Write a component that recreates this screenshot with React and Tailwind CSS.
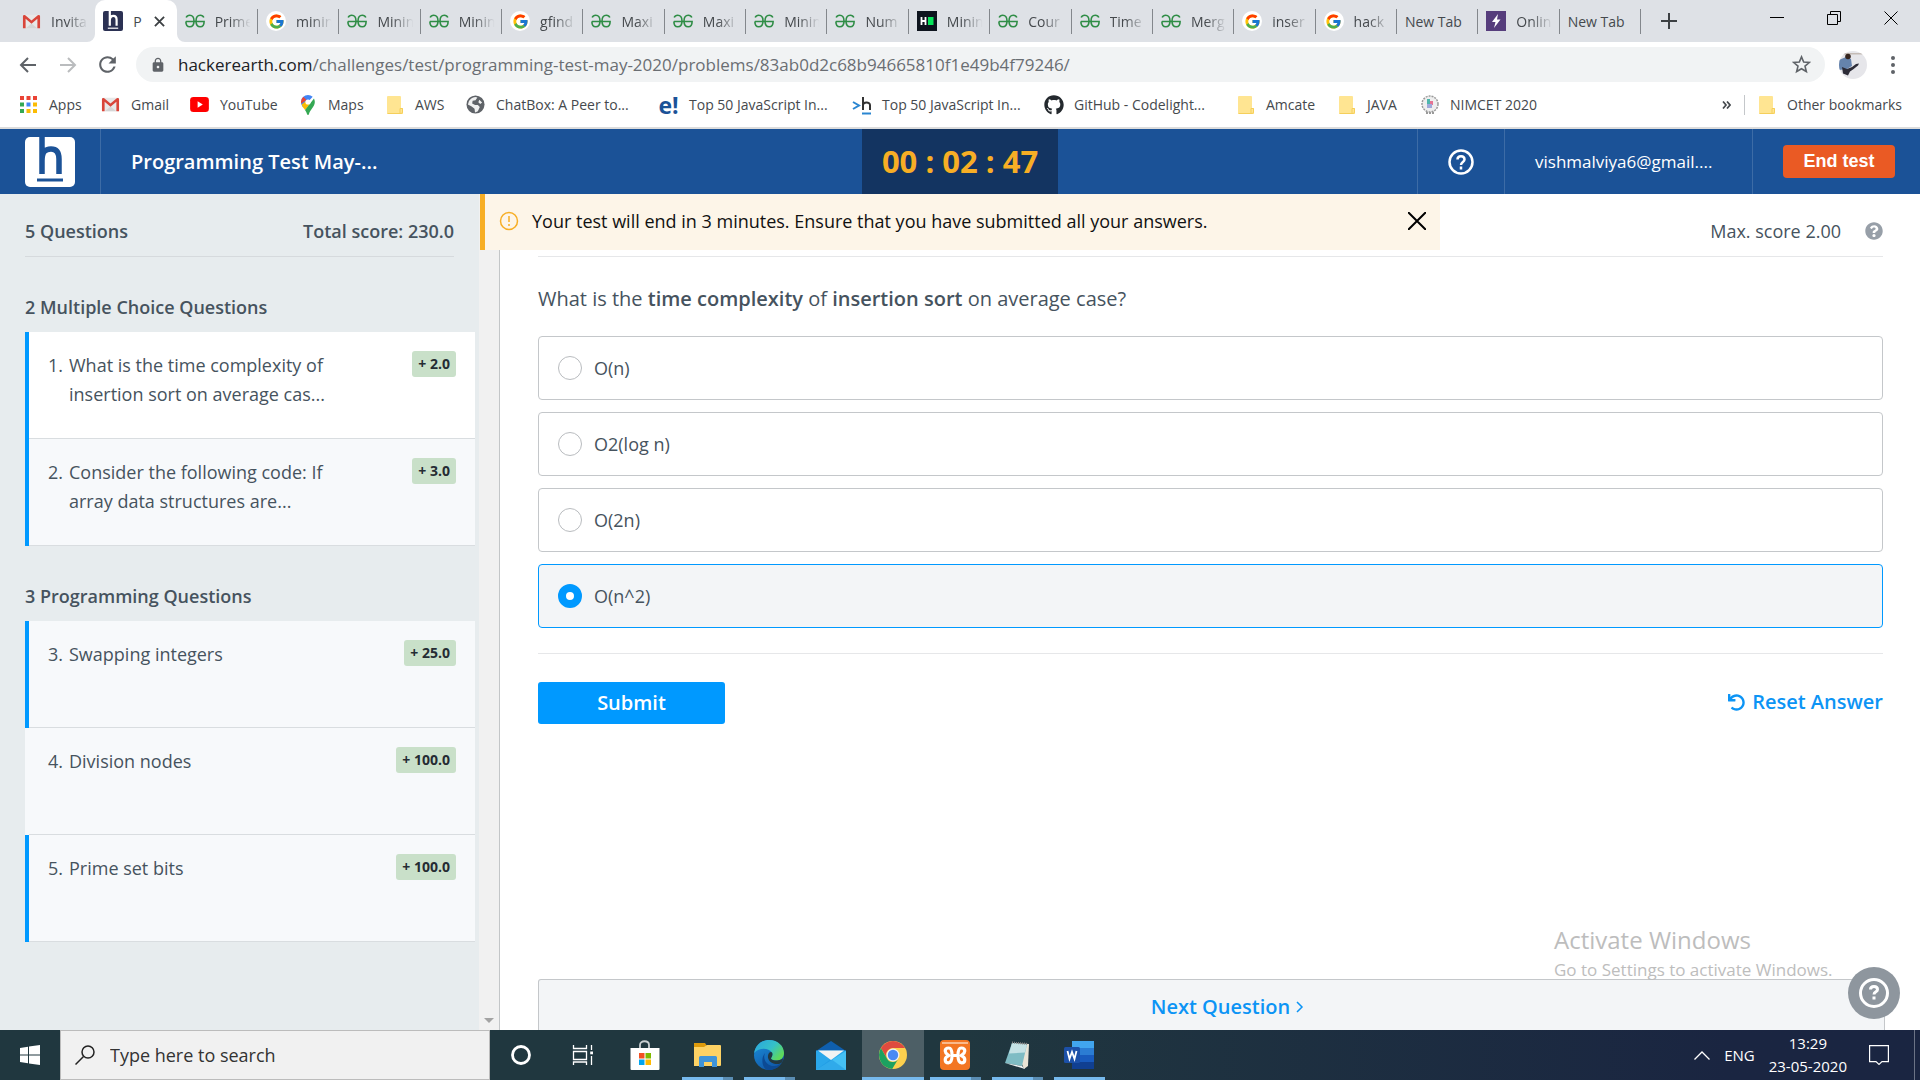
import { FcGoogle } from "react-icons/fc";
import { FaGithub, FaUndo, FaQuestionCircle } from "react-icons/fa";
import { MdLock, MdRefresh } from "react-icons/md";

const PAGE = "font-['Open_Sans','Noto_Sans',sans-serif]";

function GmailIcon() {
  return (
    <svg viewBox="0 0 20 20" className="size-[19px] shrink-0" aria-hidden="true">
      <rect x="1" y="3" width="18" height="14" rx="1" fill="#e8e8e8" />
      <path d="M4 17l6-5 6 5z" fill="#d5d5d5" />
      <path d="M1 4.5A1.5 1.5 0 0 1 3.400 3.400L10 9l6.600-5.600A1.500 1.500 0 0 1 19 4.500V17h-2.800V7.200L10 12.300 3.800 7.200V17H1z" fill="#d9453a" />
    </svg>
  );
}

function HeMark({ className, bg, fg }) {
  return (
    <svg viewBox="0 0 50 50" className={className} aria-hidden="true">
      <rect width="50" height="50" rx="5" fill={bg} />
      <path d="M17 0v37M17 24c0-9 3-12 9-12s8 4 8 10v15" fill="none" stroke={fg} strokeWidth="5.500" />
      <path d="M12 43h26" stroke={fg} strokeWidth="3" />
    </svg>
  );
}

function GoogleIcon() {
  return (
    <span className="flex size-5 shrink-0 items-center justify-center rounded-full bg-white">
      <FcGoogle size={17} />
    </span>
  );
}

function Favicon({ kind }) {
  if (kind === "gmail") return <GmailIcon />;
  if (kind === "he") return <HeMark className="size-5 shrink-0" bg="#2b3153" fg="#fff" />;
  if (kind === "google") return <GoogleIcon />;
  if (kind === "gfg")
    return (
      <svg viewBox="0 0 20 14" className="h-[14px] w-5 shrink-0" fill="none" stroke="#2f8d46" strokeWidth="1.600" aria-hidden="true">
        <path d="M18.800 3.500C18.200 2 16.800 1.200 15.300 1.200c-2.800 0-4.300 2.300-4.300 5.800s1.500 5.800 4.300 5.800c2.500 0 3.800-1.800 3.800-5.300H.9" />
        <path d="M1.200 3.500C1.800 2 3.200 1.200 4.700 1.200 7.500 1.200 9 3.500 9 7s-1.500 5.800-4.300 5.800C2.200 12.800.9 11 .9 7.500" />
      </svg>
    );
  if (kind === "hr")
    return (
      <svg viewBox="0 0 20 20" className="size-5 shrink-0" aria-hidden="true">
        <rect width="20" height="20" fill="#0e141e" />
        <path d="M4.500 6v8M8.500 6v8M4.500 10h4" stroke="#fff" strokeWidth="1.800" />
        <rect x="11" y="6" width="5.500" height="8" fill="#08e65c" />
      </svg>
    );
  if (kind === "bolt")
    return (
      <svg viewBox="0 0 20 20" className="size-5 shrink-0" aria-hidden="true">
        <rect width="20" height="20" fill="#563d7c" />
        <path d="M12 3l-6 8h3.500L8 17l6.500-8.500H11z" fill="#fff" />
      </svg>
    );
  return null;
}

const tabs = [
  ["gmail", "Invita"],
  ["he", "P"],
  ["gfg", "Prime"],
  ["google", "minin"],
  ["gfg", "Minin"],
  ["gfg", "Minin"],
  ["google", "gfind"],
  ["gfg", "Maxi"],
  ["gfg", "Maxi"],
  ["gfg", "Minin"],
  ["gfg", "Num"],
  ["hr", "Minin"],
  ["gfg", "Cour"],
  ["gfg", "Time"],
  ["gfg", "Merg"],
  ["google", "inser"],
  ["google", "hack"],
  [null, "New Tab"],
  ["bolt", "Onlin"],
  [null, "New Tab"],
];

function TabStrip() {
  return (
    <div className="flex h-[42px] shrink-0 items-stretch bg-[#dee1e6] pl-[14px] text-[14px] text-[#45494d]">
      <div role="tablist" className="grid max-w-[1627px] flex-1 auto-cols-[minmax(0,1fr)] grid-flow-col">
        {tabs.map(([kind, label], i) =>
          i === 1 ? (
            <div key={i} role="tab" aria-selected="true" className="relative flex items-center rounded-t-[10px] bg-white pl-[8px] pr-[12px]">
              <svg viewBox="0 0 8 8" className="absolute -left-2 bottom-0 size-2" fill="#fff" aria-hidden="true"><path d="M8 0v8H0a8 8 0 0 0 8-8z" /></svg>
              <svg viewBox="0 0 8 8" className="absolute -right-2 bottom-0 size-2" fill="#fff" aria-hidden="true"><path d="M0 0v8h8a8 8 0 0 1-8-8z" /></svg>
              <Favicon kind={kind} />
              <span className="ml-[10px]">{label}</span>
              <button type="button" aria-label="Close tab" className="ml-auto">
                <svg viewBox="0 0 12 12" className="size-[11px]" fill="none" stroke="#3c4043" strokeWidth="2">
                  <path d="M1 1l10 10M11 1L1 11" />
                </svg>
              </button>
            </div>
          ) : (
            <div key={i} role="tab" aria-selected="false" className="flex items-center">
              <div className="flex min-w-0 flex-1 items-center gap-[10px] pl-[8px]">
                <Favicon kind={kind} />
                <span className={kind ? "flex-1 whitespace-nowrap mask-r-from-35% mask-r-to-85%" : "whitespace-nowrap"}>{label}</span>
              </div>
              {i > 0 && <span className="h-[25px] w-px bg-[#83878c]" />}
            </div>
          )
        )}
      </div>
      <button type="button" aria-label="New tab" className="ml-5 flex items-center">
        <svg viewBox="0 0 16 16" className="size-4" stroke="#3c4043" strokeWidth="2">
          <path d="M8 0v16M0 8h16" />
        </svg>
      </button>
      <div className="ml-auto flex items-center gap-[43px] pb-[6px] pr-[22px] text-black">
        <button type="button" aria-label="Minimize">
          <svg viewBox="0 0 14 14" className="size-[14px]" stroke="currentColor">
            <path d="M0 6.500h14" />
          </svg>
        </button>
        <button type="button" aria-label="Restore">
          <svg viewBox="0 0 14 14" className="size-[14px]" fill="none" stroke="currentColor">
            <path d="M.5 3.500h10v10H.5zM3.500 3.500v-3h10v10h-3" />
          </svg>
        </button>
        <button type="button" aria-label="Close">
          <svg viewBox="0 0 14 14" className="size-[14px]" stroke="currentColor">
            <path d="M.5.5l13 13M13.500.5l-13 13" />
          </svg>
        </button>
      </div>
    </div>
  );
}

function Toolbar() {
  return (
    <div className="flex h-[45px] shrink-0 items-center bg-white pr-[25px]">
      <button type="button" aria-label="Back" className="ml-[19px]">
        <svg viewBox="0 0 18 16" className="h-4 w-[18px]" fill="none" stroke="#5f6368" strokeWidth="2">
          <path d="M17 8H2M9 1L2 8l7 7" />
        </svg>
      </button>
      <button type="button" aria-label="Forward" className="ml-[22px]">
        <svg viewBox="0 0 18 16" className="h-4 w-[18px]" fill="none" stroke="#babcbe" strokeWidth="2">
          <path d="M1 8h15M9 1l7 7-7 7" />
        </svg>
      </button>
      <button type="button" aria-label="Reload" className="ml-[18px]">
        <MdRefresh size={25} color="#5f6368" />
      </button>
      <div className="ml-4 flex h-[35px] flex-1 items-center rounded-full bg-[#f1f3f4] pl-[14px] pr-[14px]">
        <MdLock size={16} color="#5f6368" />
        <div role="textbox" aria-label="Address" className="ml-3 flex-1 text-[17px] text-[#6a6e73]">
          <span className="text-[#202124]">hackerearth.com</span>/challenges/test/programming-test-may-2020/problems/83ab0d2c68b94665810f1e49b4f79246/
        </div>
        <svg viewBox="0 0 20 20" className="size-[19px]" fill="none" stroke="#5f6368" strokeWidth="1.700">
          <path d="M10 2l2.300 5.400 5.900.5-4.500 3.800 1.400 5.700L10 14.400l-5.100 3 1.400-5.700L1.800 7.900l5.900-.5z" />
        </svg>
      </div>
      <svg viewBox="0 0 28 28" className="ml-[14px] size-7" aria-hidden="true">
        <clipPath id="avatar"><circle cx="14" cy="14" r="14" /></clipPath>
        <g clipPath="url(#avatar)">
          <rect width="28" height="28" fill="#e6e6ea" />
          <path d="M0 2h28v1.500H0z" fill="#c4bbb5" />
          <path d="M0 9l7-3 5 2 1 7-5 3-8 1z" fill="#6583ad" />
          <circle cx="9" cy="5.500" r="2.800" fill="#37261f" />
          <path d="M3 16l5 2 5-2 4-3 3-.5-1 2-5 4-3 2-2 4-5-2z" fill="#2d2c38" />
        </g>
      </svg>
      <svg viewBox="0 0 4 18" className="ml-6 h-[18px] w-1" fill="#5f6368" aria-hidden="true">
        <circle cx="2" cy="2" r="2" /><circle cx="2" cy="9" r="2" /><circle cx="2" cy="16" r="2" />
      </svg>
    </div>
  );
}

function Folder() {
  return (
    <svg viewBox="0 0 16 18" className="h-[18px] w-4" aria-hidden="true">
      <path d="M1 0h12a1 1 0 0 1 1 1v11h2v6H1a1 1 0 0 1-1-1V1a1 1 0 0 1 1-1z" fill="#ffe592" />
      <path d="M13 17v-4.500h2.500V16a1.500 1.500 0 0 1-1.500 1.500H.5" fill="none" stroke="#f5cf5a" />
    </svg>
  );
}

const appColors = ["#ea4335", "#ea4335", "#ea4335", "#34a853", "#4285f4", "#fbbc04", "#34a853", "#fbbc04", "#fbbc04"];

const bookmarks = [
  ["w-[82px]", "Apps", <svg viewBox="0 0 17 17" className="size-[17px]">{appColors.map((c, i) => <rect key={i} x={(i % 3) * 6.5} y={Math.floor(i / 3) * 6.5} width="4" height="4" fill={c} />)}</svg>],
  ["w-[89px]", "Gmail", <GmailIcon />],
  ["w-[108px]", "YouTube", <svg viewBox="0 0 20 16" className="h-[15px] w-[19px]"><rect width="20" height="16" rx="3.500" fill="#f00" /><path d="M8 4.500v7l5.500-3.500z" fill="#fff" /></svg>],
  ["w-[87px]", "Maps", <svg viewBox="0 0 14 20" className="h-5 w-[14px]"><path d="M7 0a7 7 0 0 0-7 7c0 2 .7 3.500 2 5.200L11.700 1.800A7 7 0 0 0 7 0z" fill="#4285f4" /><path d="M2.400 1.800A7 7 0 0 0 .2 8.500L5.500 5z" fill="#ea4335" /><path d="M.7 9.500C1.500 12 3 13.500 4 15l5-6-4-3z" fill="#fbbc04" /><path d="M13 3.500c2 4.500 0 7.500-2 10-1.500 2-2.500 3.500-3 5.500-.3 1.300-1.700 1.300-2 0-.4-1.500-1-2.700-2-4z" fill="#34a853" /><circle cx="7" cy="7" r="2.600" fill="#fff" /></svg>],
  ["w-[81px]", "AWS", <Folder />],
  ["w-[193px]", "ChatBox: A Peer to...", <svg viewBox="0 0 20 20" className="size-[19px]"><circle cx="10" cy="10" r="9.500" fill="#5f6368" /><path d="M12 2.500l-2 3-3 .5-.5 3 3 1.500h3l2 2-2 4.500-3 1.500-.5-4-3-2.500L2 10A8 8 0 0 1 12 2.500zM14 5l3 3-2 1.500-2-2z" fill="#fff" opacity=".9" /></svg>],
  ["w-[193px]", "Top 50 JavaScript In...", <span className="text-[23px] font-bold leading-5 text-[#1b5297]">e!</span>],
  ["w-[192px]", "Top 50 JavaScript In...", <svg viewBox="0 0 20 20" className="size-5" fill="none"><path d="M1 7l6 3.500L1 14" stroke="#2a86d1" strokeWidth="2" /><path d="M11 2v13M11 10c0-3 7-3.500 7 0v5" stroke="#333" strokeWidth="2" /><path d="M10 18.500h9" stroke="#2a86d1" strokeWidth="2" /></svg>],
  ["w-[192px]", "GitHub - Codelight...", <FaGithub size={20} color="#24292e" />],
  ["w-[101px]", "Amcate", <Folder />],
  ["w-[83px]", "JAVA", <Folder />],
  ["w-[140px]", "NIMCET 2020", <svg viewBox="0 0 20 20" className="size-5"><circle cx="10" cy="9" r="8" fill="#eee" stroke="#999" strokeDasharray="2 1" strokeWidth="1.500" /><rect x="7" y="4" width="3" height="5" fill="#4db6ac" /><rect x="10" y="6" width="3" height="4" fill="#e57393" /><rect x="7" y="9" width="5" height="4" fill="#9fa8da" /><path d="M6 18h8" stroke="#999" strokeWidth="2" strokeDasharray="2 1" /></svg>],
];

function Bookmarks() {
  return (
    <nav className="flex h-[42px] shrink-0 items-center border-b-2 border-[#dcdcdc] bg-white pb-[5px] pl-[18px] pr-[18px] text-[14px] text-[#45494d]">
      {bookmarks.map(([w, label, icon], i) => (
        <a key={i} href="#" className={`${w} flex items-center gap-[10px] whitespace-nowrap`}>
          <span className="flex w-[21px] shrink-0 justify-center">{icon}</span>
          {label}
        </a>
      ))}
      <button type="button" aria-label="More bookmarks" className="ml-auto">
        <svg viewBox="0 0 9 8" className="h-2 w-[9px]" fill="none" stroke="#45494d" strokeWidth="1.700"><path d="M1 .5L4 4 1 7.500M5 .5L8 4 5 7.500" /></svg>
      </button>
      <span className="ml-[13px] h-5 w-px bg-[#c4c7ca]" />
      <a href="#" className="ml-[14px] flex items-center gap-[12px]">
        <Folder />
        Other bookmarks
      </a>
    </nav>
  );
}

function Header() {
  return (
    <header className="grid h-[65px] shrink-0 grid-cols-[1fr_196px_1fr] bg-[#1b5297] text-white">
      <div className="flex items-stretch">
        <a href="#" aria-label="HackerEarth" className="flex w-[101px] items-center border-r border-[#3d6ca6] pl-[25px]">
          <HeMark className="size-[50px]" bg="#fff" fg="#1b5297" />
        </a>
        <h1 className="flex items-center pl-[30px] text-[20px] font-semibold">Programming Test May-...</h1>
      </div>
      <div className="flex items-center justify-center bg-[#133461] text-[31px] font-bold text-[#f7ae25]">00 : 02 : 47</div>
      <div className="flex items-stretch justify-end">
        <button type="button" aria-label="Help" className="flex w-[87px] items-center justify-center border-l border-[#3d6ca6]">
          <svg viewBox="0 0 26 26" className="size-[26px]" fill="none" stroke="#fff" strokeWidth="2.500">
            <circle cx="13" cy="13" r="11.500" />
            <path d="M9.500 10.500c0-4.500 7-4.500 7 0 0 2.500-3.500 2.500-3.500 5.500M13 17.500v3" />
          </svg>
        </button>
        <div className="flex w-[249px] items-center border-x border-[#3d6ca6] pl-[30px] text-[17px]">vishmalviya6@gmail....</div>
        <div className="flex w-[167px] items-center justify-end pr-[25px]">
          <button type="button" className="h-[33px] w-28 rounded-[4px] bg-[#ea5a24] font-['Liberation_Sans',sans-serif] text-[18px] font-bold">End test</button>
        </div>
      </div>
    </header>
  );
}

const groups = [
  {
    title: "2 Multiple Choice Questions",
    items: [
      { n: 1, text: "What is the time complexity of insertion sort on average cas...", score: "2.0", mark: true, current: true },
      { n: 2, text: "Consider the following code: If array data structures are...", score: "3.0", mark: true },
    ],
  },
  {
    title: "3 Programming Questions",
    items: [
      { n: 3, text: "Swapping integers", score: "25.0", mark: true },
      { n: 4, text: "Division nodes", score: "100.0" },
      { n: 5, text: "Prime set bits", score: "100.0", mark: true },
    ],
  },
];

function QuestionItem({ item }) {
  return (
    <li className={`border-l-4 ${item.mark ? "border-[#0099ff]" : "border-[#f7f9fb]"}`}>
      <a
        href="#"
        className={`flex min-h-[107px] items-start border-b border-[#d9dde0] pl-[19px] pr-[19px] pt-[19px] ${item.current ? "bg-white" : "bg-[#f7f9fb]"}`}
      >
        <span className="w-[21px] shrink-0 text-[18px] leading-[29px]">{item.n}.</span>
        <span className="w-[280px] text-[18px] leading-[29px]">{item.text}</span>
        <span className="ml-auto rounded-[3px] bg-[#c9e0c9] px-[6px] text-[14px] font-bold leading-[26px] text-[#252c33]">+ {item.score}</span>
      </a>
    </li>
  );
}

function Sidebar() {
  return (
    <aside className="flex w-[500px] shrink-0 border-r border-[#c3c6c8]">
      <div className="flex-1 bg-[#e7ecee] pl-[25px] pr-[4px] text-[#46535e]">
        <div className="mr-[21px] flex justify-between border-b border-[#d6dadd] pb-[10px] pt-[22px] text-[18px] font-semibold leading-[30px]">
          <span>5 Questions</span>
          <span>Total score: 230.0</span>
        </div>
        {groups.map((g) => (
          <section key={g.title} className="pt-[35px]">
            <h2 className="text-[18px] font-semibold leading-[30px]">{g.title}</h2>
            <ol className="mt-[10px]">
              {g.items.map((item) => <QuestionItem key={item.n} item={item} />)}
            </ol>
          </section>
        ))}
      </div>
      <div className="flex w-5 items-end justify-center bg-[#f1f1f1] pb-[7px]">
        <svg viewBox="0 0 10 5" className="h-[5px] w-[10px]" fill="#a3a3a3" aria-hidden="true"><path d="M0 0h10L5 5z" /></svg>
      </div>
    </aside>
  );
}

const options = ["O(n)", "O2(log n)", "O(2n)", "O(n^2)"];

function Question() {
  return (
    <main className="relative flex min-w-0 flex-1 flex-col bg-white pl-[38px] pr-[37px] text-[#46535e]">
      <div className="flex items-center justify-end gap-6 border-b border-[#e6e7e9] pb-[10px] pt-[22px] text-[18px] leading-[30px]">
        <span>Max. score 2.00</span>
        <FaQuestionCircle size={18} color="#979fa8" />
      </div>
      <p className="mt-[27px] text-[20px] leading-[30px]">
        What is the <b className="font-semibold">time complexity</b> of <b className="font-semibold">insertion sort</b> on average case?
      </p>
      <fieldset aria-label="Answer" className="mt-[22px] flex flex-col gap-3 border-b border-[#e6e7e9] pb-[25px]">
        {options.map((label, i) => (
          <label key={label} className="flex h-16 items-center gap-3 rounded-[4px] border border-[#c4c7ca] pl-[19px] text-[18px] has-checked:border-[#0099ff] has-checked:bg-[#f3f5f7]">
            <input
              type="radio"
              name="answer"
              defaultChecked={i === 3}
              className="size-6 appearance-none rounded-full border border-[#b9bcbf] bg-white checked:border-8 checked:border-[#0099ff]"
            />
            {label}
          </label>
        ))}
      </fieldset>
      <div className="mt-7 flex items-start justify-between">
        <button type="button" className="h-[42px] w-[187px] rounded-[3px] bg-[#0099ff] text-[20px] font-semibold text-white">Submit</button>
        <button type="button" className="flex h-10 items-center gap-[7px] text-[20px] font-semibold text-[#0c94f5]">
          <FaUndo size={17} />
          Reset Answer
        </button>
      </div>
      <button type="button" className="-mr-[2px] mt-auto flex h-[51px] items-center justify-center gap-[6px] rounded-t-[3px] border border-b-0 border-[#c4c7ca] bg-[#f3f5f7] pl-8 pt-1 text-[20px] font-semibold text-[#0c94f5]">
        Next Question
        <svg viewBox="0 0 8 12" className="h-3 w-2" fill="none" stroke="currentColor" strokeWidth="1.500"><path d="M1 1l5 5-5 5" /></svg>
      </button>
      <div className="pointer-events-none absolute bottom-[46px] right-[81px] w-[285px] whitespace-nowrap text-[#bdbdbd]">
        <div className="text-[24px] leading-8">Activate Windows</div>
        <div className="text-[17px] leading-7">Go to Settings to activate Windows.</div>
      </div>
      <button type="button" aria-label="Support" className="absolute bottom-[11px] right-5 flex size-[52px] items-center justify-center rounded-full bg-[#8e969e]">
        <svg viewBox="0 0 30 30" className="size-[30px]" fill="none" stroke="#fff" strokeWidth="3">
          <circle cx="15" cy="15" r="13.500" />
          <path d="M11.500 11.500c0-4 7-4 7 0 0 2.500-3.500 2-3.500 5M15 18.500v3" />
        </svg>
      </button>
    </main>
  );
}

function Alert() {
  return (
    <div role="alert" className="absolute left-1/4 top-0 flex h-14 w-1/2 items-center border-l-[5px] border-[#f7ae25] bg-[#fdf5e8] pb-[2px] pl-[14px] pr-[14px] text-[18px] text-[#111]">
      <svg viewBox="0 0 20 20" className="size-5" fill="none" stroke="#f7ae25" strokeWidth="1.500">
        <circle cx="10" cy="10" r="8.500" />
        <path d="M10 5v6M10 13v2" />
      </svg>
      <span className="ml-[13px]">Your test will end in 3 minutes. Ensure that you have submitted all your answers.</span>
      <button type="button" aria-label="Dismiss" className="ml-auto">
        <svg viewBox="0 0 18 18" className="size-[18px]" stroke="#000" strokeWidth="2"><path d="M0 0l18 18M18 0L0 18" /></svg>
      </button>
    </div>
  );
}

const taskIcons = {
  Cortana: <svg viewBox="0 0 32 32" className="size-8" fill="none" stroke="#fff" strokeWidth="2.800"><circle cx="16" cy="16" r="8.500" /></svg>,
  "Task View": <svg viewBox="0 0 32 32" className="size-8" fill="none" stroke="#fff" strokeWidth="1.300"><path d="M6.500 6v3.500h13V6M6.500 12.500h13v8h-13zM6.500 26v-3h13v3M24.500 6v5M24.500 17v9" /><path d="M23.200 12.500h2.800v2.800h-2.800z" fill="#fff" stroke="none" /></svg>,
  Store: <svg viewBox="0 0 32 32" className="size-8"><path d="M11 10V6c0-5 9-5 9 0v4" fill="none" stroke="#c9cfd1" strokeWidth="1.800" /><path d="M1.500 9h29v21a1 1 0 0 1-1 1h-27a1 1 0 0 1-1-1z" fill="#fff" /><path d="M10 14h5.500v5.500H10z" fill="#f25022" /><path d="M16.500 14H22v5.500h-5.500z" fill="#7fba00" /><path d="M10 20.500h5.500V26H10z" fill="#00a4ef" /><path d="M16.500 20.500H22V26h-5.500z" fill="#ffb900" /></svg>,
  Explorer: <svg viewBox="0 0 32 32" className="size-8"><path d="M3 4h11l2 3H29v5H3z" fill="#dd9a0b" /><path d="M3 8h10l3-2h13a1 1 0 0 1 1 1v19a1 1 0 0 1-1 1H3z" fill="#fdd264" /><path d="M8 28V18.500a1.500 1.500 0 0 1 1.500-1.500h15a1.500 1.500 0 0 1 1.500 1.500V28h-5v-5h-8v5z" fill="#3f94d8" /></svg>,
  Edge: (
    <svg viewBox="0 0 32 32" className="size-8">
      <defs>
        <linearGradient id="edgeTop" x1="0" y1="0" x2="1" y2=".6"><stop offset="0" stopColor="#2aa5e0" /><stop offset=".6" stopColor="#35c1c8" /><stop offset="1" stopColor="#5fd95a" /></linearGradient>
        <linearGradient id="edgeBody" x1="0" y1="0" x2=".6" y2="1"><stop offset="0" stopColor="#1b8fdb" /><stop offset="1" stopColor="#1058a8" /></linearGradient>
      </defs>
      <circle cx="16" cy="16" r="15" fill="url(#edgeBody)" />
      <path d="M1.200 14C2.500 6 8.500 1 16 1c9 0 15 6 15 13 0 5-3.500 7.500-7.500 7.500-4 0-6-1.500-5.500-2.500 2-2 1.500-4.500.5-6C16 9 6 8 1.200 14z" fill="url(#edgeTop)" />
      <path d="M12 14c-3 7 3 14 10 13 2.500-.3 4.500-1.500 6-2.800C25 29 20 31.300 15 31 9 30 7.500 19 12 14z" fill="#0c4a94" />
      <path d="M16 14c3-3 5 1 2 5 0 2 3 2.500 6 2.500 2 0 4-.8 6-2.200L29.500 23c-3 2.500-6 2.500-9 1.500-5-1.500-7-7-4.500-10.500z" fill="#223941" />
    </svg>
  ),
  Mail: <svg viewBox="0 0 32 32" className="size-8"><path d="M1 12L16 2l15 10z" fill="#0f5fae" /><path d="M1 11.500h30V31H1z" fill="#2aa7ea" /><path d="M1 31L31 12v19z" fill="#45c1f5" /><path d="M1 31l15-11 15 11z" fill="#1c93df" opacity=".5" /><path d="M3 11.500h26L16 21z" fill="#f3f3f3" /></svg>,
  Chrome: <svg viewBox="0 0 32 32" className="size-8"><circle cx="16" cy="16" r="14" fill="#fcd04e" /><path d="M3.900 9a14 14 0 0 1 24.200 0H16a7 7 0 0 0-6.200 10z" fill="#df4b3f" /><path d="M3.900 9a14 14 0 0 0 11.300 21l6.300-10.500a6.500 6.500 0 0 1-11.600 0z" fill="#1da160" /><circle cx="16" cy="16" r="6.500" fill="#f1f1f1" /><circle cx="16" cy="16" r="5.200" fill="#4a8af4" /></svg>,
  XAMPP: (
    <svg viewBox="0 0 32 32" className="size-8">
      <rect x="1" y="1" width="30" height="30" rx="4" fill="#f37623" />
      <path d="M3 3h26v2H3z" fill="#f9b98c" />
      <g fill="none" stroke="#fff" strokeWidth="3.200" strokeLinejoin="round">
        <path d="M16 16.500h-3C13 11.500 12.300 9 9.800 9 7.500 9 6.200 10.200 6.200 12c0 2.200 2 3.300 3.600 4.500-2 1-3.600 2.200-3.600 4.200 0 1.900 1.300 3.100 3.200 3.100 2.900 0 3.600-2.800 3.600-7.300" />
        <path d="M16 16.500h3c0-5 .7-7.500 3.200-7.500 2.300 0 3.600 1.200 3.600 3 0 2.200-2 3.300-3.600 4.500 2 1 3.600 2.200 3.600 4.200 0 1.900-1.300 3.100-3.200 3.100-2.900 0-3.600-2.800-3.600-7.300" />
      </g>
    </svg>
  ),
  Notepad: <svg viewBox="0 0 32 32" className="size-8"><path d="M12 4l16 1-1 22-4 3z" fill="#e9e4d6" /><path d="M11 4l15 1.500-5 21.500-17-3z" fill="#7fbcc4" /><path d="M11 4l15 1.500-2 8-16 1z" fill="#c5e2e5" /><path d="M4 24l17 3 3 3z" fill="#eef3f4" /><path d="M11 3.500l16 1.500" stroke="#888" strokeWidth="2" strokeDasharray="1 1" /></svg>,
  Word: <svg viewBox="0 0 32 32" className="size-8"><path d="M9 2h22v7.500H9z" fill="#41a5ee" /><path d="M9 9h22v7.500H9z" fill="#2b7cd3" /><path d="M9 16h22v7.500H9z" fill="#185abd" /><path d="M9 23h22v7H9z" fill="#103f91" /><rect x="1" y="8" width="16" height="16" rx="1.500" fill="#1c50a8" /><path d="M4.500 12l2 8L9 13l2.500 7 2-8" fill="none" stroke="#fff" strokeWidth="1.800" /></svg>,
};

const running = { Explorer: "multi", Edge: "multi", Chrome: "active", XAMPP: "multi", Notepad: "multi", Word: "single" };

function Taskbar() {
  return (
    <footer className="flex h-[50px] shrink-0 items-stretch bg-linear-to-r from-[#20373f] from-50% to-[#1a2541] to-90% text-white">
      <button type="button" aria-label="Start" className="flex w-[60px] items-center justify-center">
        <svg viewBox="0 0 20 20" className="size-5" fill="#fff"><path d="M0 3l8-1.200v7.700H0zM9 1.600L20 0v9.500H9zM0 10.500h8v7.700L0 17zM9 10.500h11V20L9 18.400z" /></svg>
      </button>
      <label className="flex w-[430px] items-center gap-[15px] border border-[#bcbcbc] bg-[#f1f1f1] pl-[14px]">
        <svg viewBox="0 0 20 20" className="size-5" fill="none" stroke="#222" strokeWidth="1.500"><circle cx="13" cy="7" r="6" /><path d="M8.500 11.500L.5 19.500" /></svg>
        <input type="text" aria-label="Search" placeholder="Type here to search" className="min-w-0 flex-1 bg-transparent text-[18px] outline-none placeholder:text-[#333]" />
      </label>
      {Object.entries(taskIcons).map(([name, icon]) => (
        <button key={name} type="button" aria-label={name} className={`flex w-[62px] flex-col items-center ${name === "Chrome" ? "bg-[#4d5f66]" : ""}`}>
          <span className="flex flex-1 items-center pt-[3px]">{icon}</span>
          <span className={`flex h-[3px] ${running[name] === "active" ? "w-full" : "w-[51px]"}`}>
            {running[name] && <span className="flex-1 bg-[#76b9ed]" />}
            {running[name] === "multi" && <span className="w-[10px] bg-[#5a8db3]" />}
          </span>
        </button>
      ))}
      <div className="ml-auto mr-[5px] flex items-center border-r border-[#6b7385] pr-[25px] text-[15px]">
        <svg viewBox="0 0 16 9" className="h-[9px] w-4" fill="none" stroke="#fff" strokeWidth="1.300"><path d="M.5 8.500L8 1l7.500 7.500" /></svg>
        <span className="ml-[14px]">ENG</span>
        <div className="ml-[14px] text-center leading-[23px]">
          <div>13:29</div>
          <div>23-05-2020</div>
        </div>
        <svg viewBox="0 0 20 20" className="ml-[22px] size-5" fill="none" stroke="#fff" strokeWidth="1.200"><path d="M.6.6h18.800v16H13l-3 2.800-3-2.800H.6z" /></svg>
      </div>
    </footer>
  );
}

export default function App() {
  return (
    <div className={`${PAGE} flex h-screen flex-col overflow-hidden bg-white`}>
      <TabStrip />
      <Toolbar />
      <Bookmarks />
      <Header />
      <div className="relative flex min-h-0 flex-1">
        <Sidebar />
        <Question />
        <Alert />
      </div>
      <Taskbar />
    </div>
  );
}
